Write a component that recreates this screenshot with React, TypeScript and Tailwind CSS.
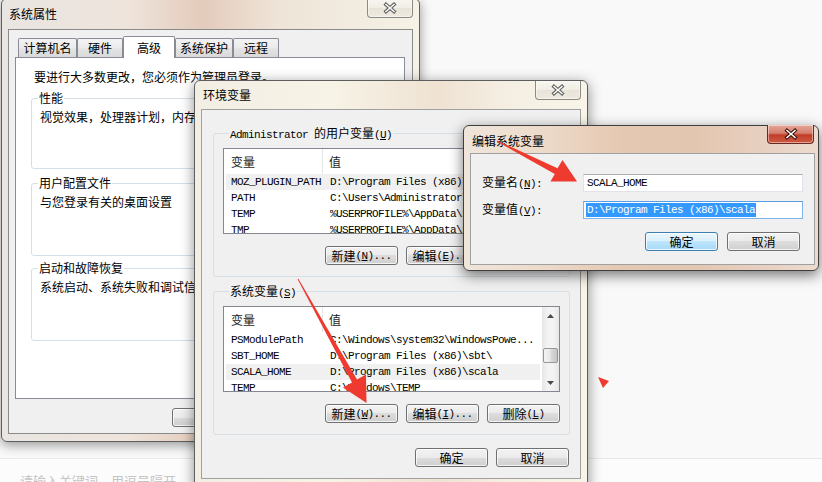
import React from 'react';

const cjk = "font-['Noto_Sans_CJK_SC',sans-serif]";
const mono = "font-['Liberation_Mono','Noto_Sans_CJK_SC',monospace] text-[11px] tracking-[-0.6px]";

type Row = [string, string];

const userVars: Row[] = [
  ['MOZ_PLUGIN_PATH', 'D:\\Program Files (x86)\\Foxit Software\\Foxit Reader\\plugins\\'],
  ['PATH', 'C:\\Users\\Administrator\\AppData\\Roaming\\npm'],
  ['TEMP', '%USERPROFILE%\\AppData\\Local\\Temp'],
  ['TMP', '%USERPROFILE%\\AppData\\Local\\Temp'],
];

const sysVars: Row[] = [
  ['PSModulePath', 'C:\\Windows\\system32\\WindowsPowe...'],
  ['SBT_HOME', 'D:\\Program Files (x86)\\sbt\\'],
  ['SCALA_HOME', 'D:\\Program Files (x86)\\scala'],
  ['TEMP', 'C:\\Windows\\TEMP'],
];

const Acc: React.FC<{ k: string; tail?: string }> = ({ k, tail = '' }) => (
  <span className={mono}>
    (<span className="underline underline-offset-[1px]">{k}</span>){tail}
  </span>
);

const CloseBtn: React.FC<{ active?: boolean; className: string }> = ({ active, className }) => (
  <div
    className={`absolute h-[19px] flex items-center justify-center rounded-b-[4px] border border-t-0 shadow-[inset_0_0_0_1px_rgba(255,255,255,0.45)] ${
      active
        ? 'w-[47px] border-[#6b2a20] bg-[linear-gradient(#e7a697,#d5806e_45%,#c23d28_55%,#cf5b44)]'
        : 'w-[46px] border-[#8c8a84] bg-[linear-gradient(#f8f6f0,#f0ede4_50%,#e7e3d8_50%,#eeeadf)]'
    } ${className}`}
  >
    <svg width="14" height="12" viewBox="0 0 14 12">
      <path d="M3 2.5 L11 9.5 M11 2.5 L3 9.5" stroke={active ? '#3a1510' : '#5d5d5d'} strokeWidth="3.6" strokeLinecap="square" fill="none" />
      <path d="M3 2.5 L11 9.5 M11 2.5 L3 9.5" stroke="#ffffff" strokeWidth="1.5" strokeLinecap="square" fill="none" />
    </svg>
  </div>
);

const WinBtn: React.FC<{ children: React.ReactNode; focused?: boolean; className?: string }> = ({ children, focused, className = '' }) => (
  <div
    className={`w-[73px] h-[19px] shrink-0 flex items-center justify-center rounded-[3px] border shadow-[inset_0_0_0_1px_rgba(255,255,255,0.75)] ${
      focused
        ? 'border-[#3c7fb1] bg-[linear-gradient(#eaf6fd,#d9f0fc_50%,#bee6fd_50%,#a7d9f5)]'
        : 'border-[#707070] bg-[linear-gradient(#f2f2f2,#ebebeb_50%,#dddddd_50%,#cfcfcf)]'
    } ${className}`}
  >
    {children}
  </div>
);

const GroupBox: React.FC<{ label: React.ReactNode; labelBg: string; className?: string; children?: React.ReactNode }> = ({
  label,
  labelBg,
  className = '',
  children,
}) => (
  <div className={`rounded-[3px] border border-[#d5dfe5] ${className}`}>
    <div className={`-mt-[8px] ml-[6px] w-fit px-[1px] h-[14px] leading-[14px] whitespace-nowrap ${labelBg}`}>{label}</div>
    {children}
  </div>
);

const Scrollbar: React.FC<{ thumb: string }> = ({ thumb }) => (
  <div className="w-[17px] shrink-0 flex flex-col bg-[linear-gradient(90deg,#e6e6e6,#f3f3f3_35%,#f3f3f3_65%,#e6e6e6)]">
    <div className="h-[17px] flex items-center justify-center">
      <svg width="7" height="4" viewBox="0 0 7 4">
        <path d="M0 4 L3.5 0 L7 4 Z" fill="#4a4a4a" />
      </svg>
    </div>
    <div className="flex-1">
      <div className={`mx-[1px] h-[15px] rounded-[2px] border border-[#979797] bg-[linear-gradient(90deg,#f3f3f3,#e9e9e9_45%,#d9d9d9_55%,#c4c4c4)] ${thumb}`} />
    </div>
    <div className="h-[17px] flex items-center justify-center">
      <svg width="7" height="4" viewBox="0 0 7 4">
        <path d="M0 0 L7 0 L3.5 4 Z" fill="#4a4a4a" />
      </svg>
    </div>
  </div>
);

const VarList: React.FC<{ rows: Row[]; sel: number; thumb: string }> = ({ rows, sel, thumb }) => (
  <div className="h-[86px] flex border border-[#828790] bg-white">
    <div className="flex-1 min-w-0 overflow-hidden">
      <div className="h-[25px] flex text-[#1e1e1e]">
        <div className="w-[99px] shrink-0 flex items-center pl-[7px] border-r border-[#e5e5e5]">变量</div>
        <div className="flex items-center pl-[6px]">值</div>
      </div>
      {rows.map(([name, value], i) => (
        <div
          key={name + i}
          className={`mx-[2px] h-[16px] flex items-center whitespace-nowrap leading-[16px] ${mono} ${i === sel ? 'bg-[#f0f0f0]' : ''}`}
        >
          <div className="w-[97px] shrink-0 pl-[5px]">{name}</div>
          <div className="pl-[7px]">{value}</div>
        </div>
      ))}
    </div>
    <Scrollbar thumb={thumb} />
  </div>
);

const tabs = [
  { label: '计算机名', w: 'w-[59px]' },
  { label: '硬件', w: 'w-[46px]' },
  { label: '高级', w: 'w-[52px]', active: true },
  { label: '系统保护', w: 'w-[58px]' },
  { label: '远程', w: 'w-[46px]' },
];

const SysProps = () => (
  <div className="absolute left-[1px] top-[-2px] w-[419px] h-[444px] flex flex-col rounded-[6px] border border-[#5e5e5e] bg-[linear-gradient(90deg,#e9e5e1_0%,#eee4dc_30%,#e4cbbb_48%,#eee4d8_66%,#f6f2e6_100%)] shadow-[0_3px_12px_rgba(0,0,0,0.4)]">
    <div className="h-[30px] shrink-0 pl-[7px] flex items-center">系统属性</div>
    <CloseBtn className="top-0 right-[6px]" />
    <div className="mx-[6px] h-[405px] border border-[#8a8a8a] bg-[#f0f0f0] pt-[6px] pl-[6px] pr-[7px]">
      <div className="flex items-end pl-[3px]">
        {tabs.map((t) =>
          t.active ? (
            <div key={t.label} className={`${t.w} h-[22px] -mb-[1px] relative z-10 flex items-center justify-center rounded-t-[2px] border border-b-0 border-[#898c95] bg-white`}>
              {t.label}
            </div>
          ) : (
            <div key={t.label} className={`${t.w} h-[19px] flex items-center justify-center rounded-t-[2px] border border-b-0 border-[#898c95] bg-[linear-gradient(#f3f3f3,#ebebeb_50%,#e3e3e3_55%,#d9d9d9)]`}>
              {t.label}
            </div>
          )
        )}
      </div>
      <div className="h-[342px] border border-[#898c95] bg-white pt-[12px] px-[15px]">
        <div className="ml-[3px] whitespace-nowrap">要进行大多数更改，您必须作为管理员登录。</div>
        <GroupBox label="性能" labelBg="bg-white" className="mt-[14px] h-[71px]">
          <div className="mt-[5px] pl-[8px] whitespace-nowrap">视觉效果，处理器计划，内存使用，以及虚拟内存</div>
        </GroupBox>
        <GroupBox label="用户配置文件" labelBg="bg-white" className="mt-[14px] h-[73px]">
          <div className="mt-[5px] pl-[8px] whitespace-nowrap">与您登录有关的桌面设置</div>
        </GroupBox>
        <GroupBox label="启动和故障恢复" labelBg="bg-white" className="mt-[12px] h-[73px]">
          <div className="mt-[5px] pl-[8px] whitespace-nowrap">系统启动、系统失败和调试信息</div>
        </GroupBox>
      </div>
      <div className="mt-[9px] flex justify-end gap-[7px]">
        <WinBtn>确定</WinBtn>
        <WinBtn>取消</WinBtn>
        <WinBtn>
          应用<Acc k="A" />
        </WinBtn>
      </div>
    </div>
  </div>
);

const EnvVars = () => (
  <div className="absolute left-[194px] top-[80px] w-[394px] h-[410px] flex flex-col rounded-t-[6px] border border-[#5e5e5e] bg-[linear-gradient(90deg,#f2eee4_0%,#f7f3e6_35%,#efe2d2_62%,#f5efe3_80%,#f8f5e8_100%)] shadow-[0_3px_14px_rgba(0,0,0,0.45)]">
    <div className="h-[28px] shrink-0 pl-[8px] flex items-center">环境变量</div>
    <CloseBtn className="top-0 right-[6px]" />
    <div className="ml-[6px] w-[380px] h-[370px] border border-[#a0a0a0] bg-[#f0f0f0] pt-[23px] pl-[11px] pr-[10px]">
      <GroupBox
        labelBg="bg-[#f0f0f0]"
        className="px-[9px] pb-[11px]"
        label={
          <>
            <span className={mono}>Administrator </span>的用户变量<Acc k="U" />
          </>
        }
      >
        <div className="mt-[8px]">
          <VarList rows={userVars} sel={0} thumb="mt-0" />
        </div>
        <div className="mt-[12px] flex justify-end gap-[8px]">
          <WinBtn>
            新建<Acc k="N" tail="..." />
          </WinBtn>
          <WinBtn>
            编辑<Acc k="E" tail="..." />
          </WinBtn>
          <WinBtn>
            删除<Acc k="D" />
          </WinBtn>
        </div>
      </GroupBox>
      <GroupBox
        labelBg="bg-[#f0f0f0]"
        className="mt-[14px] px-[9px] pb-[11px]"
        label={
          <>
            系统变量<Acc k="S" />
          </>
        }
      >
        <div className="mt-[8px]">
          <VarList rows={sysVars} sel={2} thumb="mt-[24px]" />
        </div>
        <div className="mt-[12px] flex justify-end gap-[8px]">
          <WinBtn>
            新建<Acc k="W" tail="..." />
          </WinBtn>
          <WinBtn>
            编辑<Acc k="I" tail="..." />
          </WinBtn>
          <WinBtn>
            删除<Acc k="L" />
          </WinBtn>
        </div>
      </GroupBox>
      <div className="mt-[13px] flex justify-end gap-[8px] pr-[1px]">
        <WinBtn>确定</WinBtn>
        <WinBtn>取消</WinBtn>
      </div>
    </div>
  </div>
);

const EditVar = () => (
  <div className="absolute left-[463px] top-[125px] w-[356px] h-[146px] flex flex-col rounded-[6px] border border-[#3f3f3f] bg-[linear-gradient(90deg,#efe5da_0%,#eddccc_20%,#e5c8b1_45%,#e3c6b0_65%,#e8d0c1_85%,#ecdccf_100%)] shadow-[0_4px_14px_rgba(0,0,0,0.55)]">
    <div className="h-[27px] shrink-0 pl-[8px] pt-[3px] flex items-center">编辑系统变量</div>
    <CloseBtn active className="top-[-1px] right-[4px]" />
    <div className="ml-[6px] w-[345px] h-[112px] border border-[#a0a0a0] bg-[#f0f0f0] pt-[20px] pl-[11px] pr-[11px]">
      <div className="h-[18px] flex items-center">
        <div className="w-[101px] shrink-0">
          变量名<Acc k="N" tail=":" />
        </div>
        <div className={`w-[220px] h-[18px] flex items-center pl-[3px] border border-[#e2e3ea] border-t-[#abadb3] bg-white ${mono}`}>
          SCALA_HOME
        </div>
      </div>
      <div className="mt-[9px] h-[18px] flex items-center">
        <div className="w-[101px] shrink-0">
          变量值<Acc k="V" tail=":" />
        </div>
        <div className={`w-[220px] h-[18px] flex items-center pl-[2px] border border-[#7eb4ea] border-t-[#569de5] bg-white ${mono}`}>
          <span className="h-[14px] leading-[14px] px-[1px] bg-[#3399ff] text-white whitespace-nowrap">D:\Program Files (x86)\scala</span>
        </div>
      </div>
      <div className="mt-[13px] pr-[3px] flex justify-end gap-[9px]">
        <WinBtn focused className="w-[72px]">
          确定
        </WinBtn>
        <WinBtn className="w-[72px]">取消</WinBtn>
      </div>
    </div>
  </div>
);

const Arrows = () => (
  <svg className="absolute left-0 top-0 pointer-events-none" width="822" height="482" viewBox="0 0 822 482">
    <polygon
      points="497.2,140.6 557.5,168.2 562.5,160 577,181.5 550.5,181.5 554.8,174 496.8,141.4"
      fill="#ef3b2f"
    />
    <polygon
      points="298.4,278.8 357,379.5 366,374.5 366.5,403 343,387.5 352,382.5 297.6,279.2"
      fill="#ef3b2f"
    />
    <polygon points="598,377 609,381 603,388" fill="#ef3b2f" />
  </svg>
);

export default function App() {
  return (
    <div className={`relative w-[822px] h-[482px] overflow-hidden flex flex-col bg-[#f9f9f9] text-black text-[12px] leading-[14px] ${cjk}`}>
      <div className="h-[458px] shrink-0" />
      <div className="flex-1 border-t border-[#e8e8e8] bg-[#fcfcfc] pl-[20px] pt-[14px] text-[13px] leading-[16px] text-[#c4c4c4] whitespace-nowrap">
        请输入关键词，用逗号隔开
      </div>
      <SysProps />
      <EnvVars />
      <EditVar />
      <Arrows />
    </div>
  );
}
